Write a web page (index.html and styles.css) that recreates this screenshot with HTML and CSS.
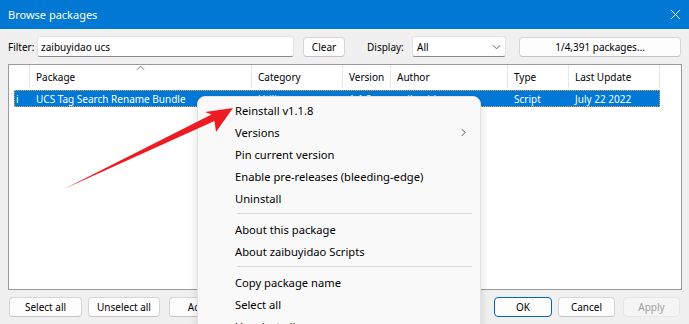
FILE: index.html
```html
<!DOCTYPE html>
<html>
<head>
<meta charset="utf-8">
<title>Browse packages</title>
<link rel="stylesheet" href="styles.css">
</head>
<body>
<div class="window">
  <div class="titlebar">
    <span class="title">Browse packages</span>
    <svg class="close" viewBox="0 0 12 12"><path d="M1 1 L11 11 M11 1 L1 11" stroke="#fff" stroke-width="1" fill="none"/></svg>
  </div>
  <div class="toolbar">
    <span class="lbl">Filter:</span>
    <div class="input">zaibuyidao ucs</div>
    <div class="btn clear">Clear</div>
    <span class="lbl display-lbl">Display:</span>
    <div class="select"><span>All</span><svg class="chev" viewBox="0 0 10 6"><path d="M1 1 L5 5 L9 1" stroke="#555" stroke-width="1" fill="none"/></svg></div>
    <div class="btn count">1/4,391 packages…</div>
  </div>
  <div class="list">
    <div class="header">
      <div class="hcell"></div>
      <div class="hcell sorted">Package<svg class="sort" viewBox="0 0 10 6"><path d="M1 5 L5 1 L9 5" stroke="#666" stroke-width="1" fill="none"/></svg></div>
      <div class="hcell">Category</div>
      <div class="hcell">Version</div>
      <div class="hcell">Author</div>
      <div class="hcell">Type</div>
      <div class="hcell">Last Update</div>
      <div class="hcell last"></div>
    </div>
    <div class="row selected">
      <div class="cell first">i</div>
      <div class="cell">UCS Tag Search Rename Bundle</div>
      <div class="cell">Utility</div>
      <div class="cell">1.1.8</div>
      <div class="cell">zaibuyidao</div>
      <div class="cell">Script</div>
      <div class="cell">July 22 2022</div>
    </div>
  </div>
  <div class="footer">
    <div class="btn fb sel-all">Select all</div>
    <div class="btn fb unsel">Unselect all</div>
    <div class="btn fb actions">Actions</div>
    <div class="spacer"></div>
    <div class="btn fb ok">OK</div>
    <div class="btn fb cancel">Cancel</div>
    <div class="btn fb apply">Apply</div>
  </div>
</div>

<div class="menu">
  <div class="item">Reinstall v1.1.8</div>
  <div class="item sub">Versions<svg class="subchev" viewBox="0 0 6 10"><path d="M1 1 L5 5 L1 9" stroke="#333" stroke-width="1" fill="none"/></svg></div>
  <div class="item">Pin current version</div>
  <div class="item">Enable pre-releases (bleeding-edge)</div>
  <div class="item">Uninstall</div>
  <div class="sep"></div>
  <div class="item">About this package</div>
  <div class="item">About zaibuyidao Scripts</div>
  <div class="sep"></div>
  <div class="item">Copy package name</div>
  <div class="item">Select all</div>
  <div class="item">Unselect all</div>
</div>

<svg class="arrow" viewBox="0 0 689 324" width="689" height="324">
  <polygon points="64,189 211.5,114.5 205,112 233,108 216,132 214.5,121" fill="#ed1c24"/>
</svg>
</body>
</html>
```
FILE: styles.css
```css
* { box-sizing: border-box; }
html, body { margin: 0; padding: 0; }
body {
  width: 689px;
  height: 324px;
  overflow: hidden;
  position: relative;
  background: #f0f0f0;
  font-family: "Noto Sans", "Open Sans", sans-serif;
  font-size: 10px;
  color: #000;
}
.window { display: flex; flex-direction: column; }
.titlebar {
  height: 29px;
  background: #0078d4;
  color: #fff;
  display: flex;
  align-items: center;
  justify-content: space-between;
  padding: 0 8px 0 8px;
  font-size: 11px;
}
.close { width: 11px; height: 11px; }
.toolbar {
  display: flex;
  align-items: center;
  height: 21px;
  margin-top: 7px;
  padding-left: 8px;
}
.lbl { width: 29px; }
.input {
  width: 257px;
  height: 21px;
  background: #fff;
  border: 1px solid #e3e3e3;
  border-bottom-color: #8a8a8a;
  border-radius: 3px;
  padding-left: 3px;
  display: flex;
  align-items: center;
}
.btn {
  height: 20px;
  background: #fdfdfd;
  border: 1px solid #d6d6d6;
  border-bottom-color: #c4c4c4;
  border-radius: 4px;
  display: flex;
  align-items: center;
  justify-content: center;
}
.clear { width: 42px; margin-left: 9px; }
.display-lbl { margin-left: 22px; width: 45px; }
.select {
  width: 94px;
  height: 21px;
  background: #fff;
  border: 1px solid #e3e3e3;
  border-bottom-color: #8a8a8a;
  border-radius: 3px;
  padding: 0 4px 0 4px;
  display: flex;
  align-items: center;
  justify-content: space-between;
}
.chev { width: 9px; height: 6px; }
.count { margin-left: 13px; width: 162px; }

.list {
  margin: 7px 0 0 8px;
  width: 674px;
  height: 226px;
  background: #fff;
  border: 1px solid #9a9a9a;
}
.header {
  display: grid;
  grid-template-columns: 21px 222px 91px 48px 117px 61px 91px 1fr;
  height: 23px;
}
.hcell {
  position: relative;
  display: flex;
  align-items: center;
  padding-left: 6px;
  border-right: 1px solid #e5e5e5;
}
.hcell.last { border-right: none; }
.sort {
  position: absolute;
  left: 106px;
  top: 0px;
  width: 9px;
  height: 6px;
}
.row {
  display: grid;
  grid-template-columns: 16px 222px 91px 48px 117px 61px 91px;
  height: 17px;
  margin: 2px 0 0 5px;
  width: 646px;
}
.row.selected {
  background: #0078d7;
  color: #fff;
  outline: 1px dotted #f2a33a;
  outline-offset: -1px;
}
.cell {
  display: flex;
  align-items: center;
  padding-left: 6px;
  white-space: nowrap;
  overflow: hidden;
}
.cell.first { padding-left: 2px; }

.footer {
  display: flex;
  align-items: center;
  margin-top: 7px;
  padding: 0 9px 0 9px;
}
.fb { height: 20px; }
.sel-all { width: 73px; }
.unsel { width: 72px; margin-left: 6px; }
.actions { width: 72px; margin-left: 9px; }
.spacer { flex: 1; }
.ok { width: 58px; border: 1px solid #0067c0; }
.cancel { width: 57px; margin-left: 6px; }
.apply {
  width: 57px;
  margin-left: 8px;
  background: #f5f5f5;
  color: #9d9d9d;
  border-color: #e5e5e5;
}

.menu {
  position: absolute;
  left: 197px;
  top: 96px;
  width: 284px;
  height: 250px;
  background: #f9f9f9;
  border: 1px solid #e2e2e2;
  border-radius: 8px;
  box-shadow: 0 4px 10px rgba(0,0,0,0.14);
  padding-top: 2px;
  font-size: 11.2px;
}
.item {
  height: 22px;
  display: flex;
  align-items: center;
  padding-left: 37px;
  padding-right: 14px;
  justify-content: space-between;
}
.subchev { width: 5px; height: 9px; }
.sep {
  height: 9px;
  display: flex;
  align-items: center;
  padding: 0 8px 0 39px;
}
.sep::before {
  content: "";
  display: block;
  height: 1px;
  width: 100%;
  background: #d9d9d9;
}
.arrow {
  position: absolute;
  left: 0;
  top: 0;
  pointer-events: none;
}
```
